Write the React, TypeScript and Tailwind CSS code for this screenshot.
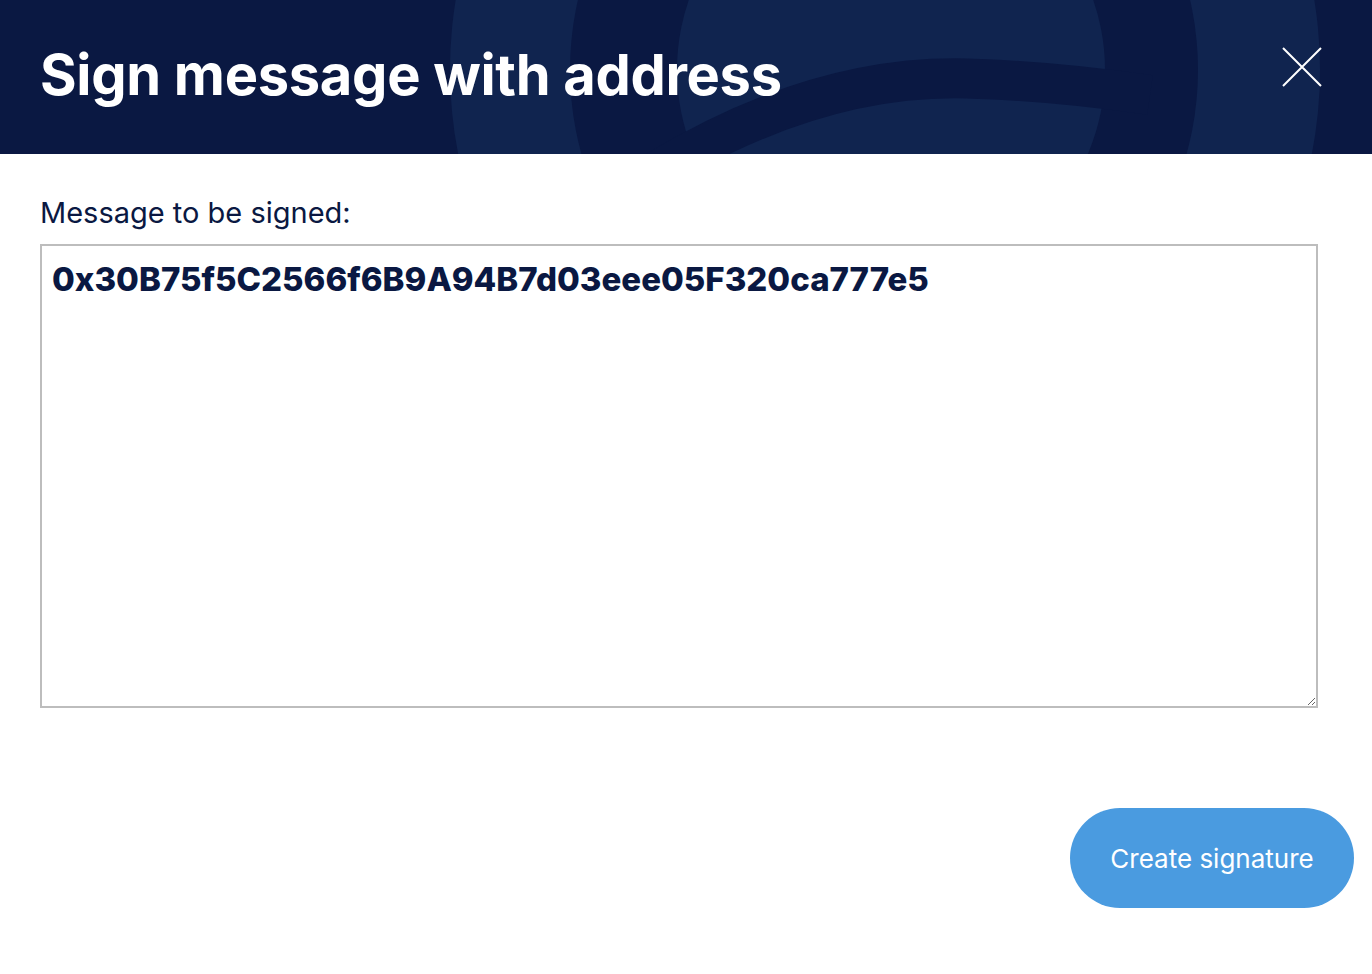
export default function App() {
  const address = '0x30B75f5C2566f6B9A94B7d03eee05F320ca777e5'

  return (
    <div className="w-[1372px] h-[974px] bg-white" style={{ fontFamily: 'Inter, "Open Sans", sans-serif' }}>
      {/* Header */}
      <div className="relative h-[154px] bg-[#0a1842] overflow-hidden flex items-center justify-between pl-10 pr-[50px]">
        <svg className="absolute inset-0" width="1372" height="154" viewBox="0 0 1372 154">
          <circle cx="885" cy="70" r="435" fill="#10244f" />
          <circle cx="884" cy="70" r="314" fill="#0a1842" />
          <circle cx="891" cy="70" r="214" fill="#10244f" />
          <path d="M 650 175 Q 820 70 980 79 Q 1060 82 1150 95" stroke="#0a1842" strokeWidth="40" fill="none" />
        </svg>
        <h1 className="relative text-white font-bold text-[56px] leading-none tracking-[-0.3px] -mt-1">Sign message with address</h1>
        <button className="relative w-10 h-10 -mt-[20px]" aria-label="Close">
          <svg width="40" height="40" viewBox="0 0 40 40">
            <path d="M1 1 L39 39 M39 1 L1 39" stroke="white" strokeWidth="2" />
          </svg>
        </button>
      </div>

      {/* Body */}
      <div className="pl-10 pr-[18px] pt-[44px]">
        <label className="block text-[29px] leading-none text-[#0a1842] mb-[17px]">Message to be signed:</label>
        <textarea
          defaultValue={address}
          className="block w-[1278px] h-[464px] border-2 border-[#bdbdbd] px-[10px] pt-[13px] text-[33px] font-extrabold text-[#0a1842] leading-tight outline-none"
        />
        <div className="flex justify-end mt-[100px]">
          <button className="h-[100px] w-[284px] rounded-full bg-[#4a9be0] text-white text-[26px]">Create signature</button>
        </div>
      </div>
    </div>
  )
}
